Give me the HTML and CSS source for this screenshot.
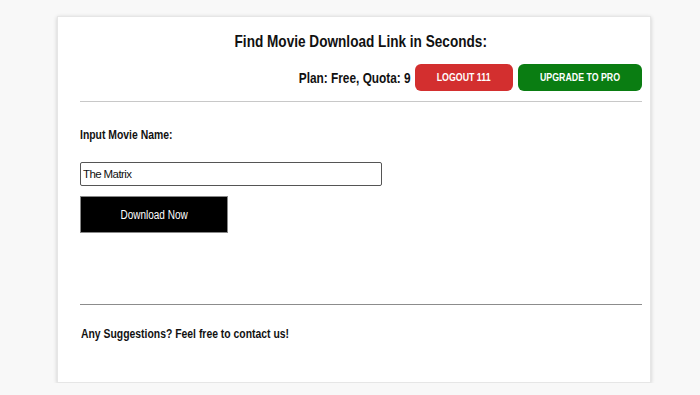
FILE: index.html
```html
<!DOCTYPE html>
<html lang="en">
  <head>
    <meta charset="UTF-8" />
    <meta name="viewport" content="width=device-width, initial-scale=1.0" />
    <title>Find Movie Download Link</title>
    <link rel="stylesheet" href="styles.css">
  </head>
  <body>
    <div class="card">
      <div class="header">
        <h1 class="title"><span class="narrow">Find Movie Download Link in Seconds:</span></h1>
        <div class="plan-row">
          <span class="plan narrow">Plan: Free, Quota: 9</span>
          <a class="btn red" href="#"><span class="narrow">LOGOUT 111</span></a>
          <a class="btn green" href="#"><span class="narrow">UPGRADE TO PRO</span></a>
        </div>
      </div>

      <div class="hr light"></div>

      <div class="search">
        <p class="label"><span class="narrow">Input Movie Name:</span></p>
        <input class="movie-input" type="text" value="The Matrix" />
        <button class="download"><span class="narrow">Download Now</span></button>
      </div>

      <div class="hr dark"></div>

      <p class="footer"><span class="narrow">Any Suggestions? Feel free to contact us!</span></p>
    </div>
  </body>
</html>
```

FILE: styles.css
```css
html {
  background-color: #f8f8f8;
}

body {
  margin: 0;
  padding-top: 16px;
  font-family: "Liberation Sans", Arial, sans-serif;
  color: #111;
}

* {
  margin: 0;
  box-sizing: border-box;
}

/* the text on this page is a condensed helvetica */
.narrow {
  display: inline-block;
  transform: scaleX(0.8);
  transform-origin: center;
  white-space: nowrap;
}

.card {
  width: 594px;
  height: 367px;
  margin-left: 57px;
  background-color: white;
  border: 1px solid #e6e6e6;
  box-shadow: 0 1px 4px rgba(0, 0, 0, 0.18);
  padding: 0 8px 0 22px;
}

.header {
  display: flex;
  flex-flow: column;
}

.title {
  font-size: 17px;
  font-weight: bold;
  text-align: center;
  line-height: 20px;
  margin-top: 15px;
}

.plan-row {
  display: flex;
  justify-content: flex-end;
  align-items: center;
  gap: 5px;
  margin-top: 12px;
}

.plan {
  font-size: 15px;
  font-weight: bold;
  transform: scaleX(0.79);
  transform-origin: right center;
  margin-right: -1px;
}

.btn {
  display: block;
  height: 27px;
  line-height: 27px;
  border-radius: 6px;
  color: white;
  font-size: 11px;
  font-weight: bold;
  text-align: center;
  text-decoration: none;
}

.red {
  width: 98px;
  background-color: #d32f2f;
}

.green {
  width: 124px;
  background-color: #0a7d12;
}

.hr {
  height: 1px;
  margin-top: 10px;
}

.hr.light {
  background-color: #c8c8c8;
}

.hr.dark {
  background-color: #8c8c8c;
  margin-top: 71px;
}

.search {
  display: flex;
  flex-flow: column;
  align-items: flex-start;
}

.label {
  font-size: 13px;
  font-weight: bold;
  line-height: 16px;
  margin-top: 25px;
}

.label .narrow,
.footer .narrow {
  transform-origin: left center;
}

.movie-input {
  margin-top: 19px;
  width: 302px;
  height: 24px;
  border: 1px solid #555;
  border-radius: 2px;
  padding: 0 2px;
  font-family: inherit;
  font-size: 11.5px;
  letter-spacing: -0.6px;
  color: #111;
}

.download {
  margin-top: 10px;
  width: 148px;
  height: 37px;
  background-color: black;
  border: 1px solid #888;
  color: white;
  font-family: inherit;
  font-size: 12.5px;
}

.footer {
  font-size: 13px;
  font-weight: bold;
  margin-top: 21px;
  margin-left: 1px;
}
```
